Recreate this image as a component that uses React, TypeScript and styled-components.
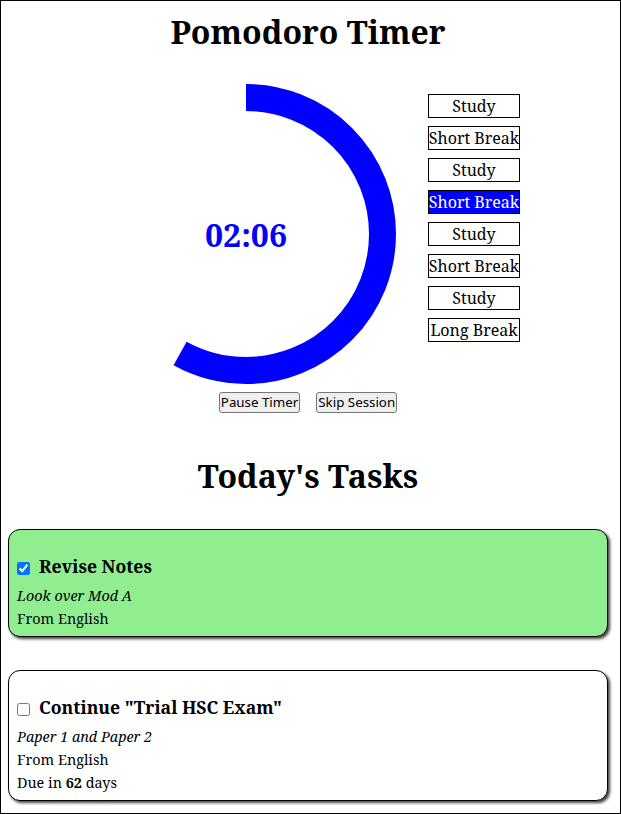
import React from "react";
import styled, { createGlobalStyle } from "styled-components";

const GlobalStyle = createGlobalStyle`
  html, body {
    margin: 0;
    padding: 0;
  }
  body {
    font-family: "Noto Serif", "DejaVu Serif", serif;
    color: #000;
    background: #fff;
  }
`;

const Frame = styled.div`
  border: 1px solid #000;
  min-height: 100vh;
  box-sizing: border-box;
`;

const Content = styled.main`
  width: 600px;
  margin-left: 7px;
  display: flex;
  flex-direction: column;
`;

const Heading = styled.h1<{ $top: number; $bottom: number }>`
  font-size: 32px;
  font-weight: bold;
  text-align: center;
  margin: ${(p) => p.$top}px 0 ${(p) => p.$bottom}px;
`;

const TimerRow = styled.section`
  display: flex;
  justify-content: center;
  align-items: flex-start;
  gap: 32px;
`;

const Dial = styled.svg`
  display: block;
  width: 300px;
  height: 300px;
  flex: none;
`;

const SessionList = styled.ol`
  list-style: none;
  margin: 10px 0 0;
  padding: 0;
  display: flex;
  flex-direction: column;
  gap: 8px;
`;

const SessionItem = styled.li<{ $active?: boolean }>`
  border: 1px solid #000;
  text-align: center;
  font-size: 16px;
  line-height: 22px;
  background: ${(p) => (p.$active ? "#0000ff" : "#fff")};
  color: ${(p) => (p.$active ? "#fff" : "#000")};
`;

const Controls = styled.div`
  display: flex;
  justify-content: center;
  gap: 16px;
  margin-top: 8px;
`;

const ControlButton = styled.button`
  font-family: "Noto Sans", "Open Sans", sans-serif;
  font-size: 13.333px;
  line-height: 17px;
  padding: 1px 1px;
  background: #efefef;
  color: #000;
  border: 1px solid #767676;
  border-radius: 3px;
`;

const TaskList = styled.div`
  display: flex;
  flex-direction: column;
  gap: 33px;
`;

const TaskCard = styled.article<{ $done?: boolean }>`
  border: 1px solid #000;
  border-radius: 12px;
  box-shadow: 2px 2px 3px rgba(0, 0, 0, 0.75);
  background: ${(p) => (p.$done ? "#90ee90" : "#fff")};
  padding: 8px 8px 6px;
`;

const TaskTitle = styled.h3`
  display: flex;
  align-items: center;
  gap: 9px;
  margin: 16px 0 5px;
  font-size: 17.6px;
  font-weight: bold;
  line-height: 25px;
`;

const Check = styled.input`
  margin: 3px 0 0;
  width: 13px;
  height: 13px;
`;

const Detail = styled.div<{ $italic?: boolean }>`
  font-size: 14.4px;
  line-height: 23px;
  font-style: ${(p) => (p.$italic ? "italic" : "normal")};
`;

const sessions = [
  "Study",
  "Short Break",
  "Study",
  "Short Break",
  "Study",
  "Short Break",
  "Study",
  "Long Break",
];

const R = 136.5;
const C = 2 * Math.PI * R;
const progress = 174 / 300;

export default function App() {
  return (
    <>
      <GlobalStyle />
      <Frame>
        <Content>
          <Heading $top={9} $bottom={31}>Pomodoro Timer</Heading>
          <TimerRow>
            <Dial viewBox="0 0 300 300">
              <circle
                cx={150}
                cy={150}
                r={R}
                fill="none"
                stroke="#0000ff"
                strokeWidth={27}
                strokeDasharray={`${C * progress} ${C}`}
                transform="rotate(-90 150 150)"
              />
              <text
                x={150}
                y={162.5}
                textAnchor="middle"
                fill="#0000ff"
                fontSize={32}
                fontWeight="bold"
                fontFamily='"Noto Serif", "DejaVu Serif", serif'
              >
                02:06
              </text>
            </Dial>
            <SessionList>
              {sessions.map((s, i) => (
                <SessionItem key={i} $active={i === 3}>
                  {s}
                </SessionItem>
              ))}
            </SessionList>
          </TimerRow>
          <Controls>
            <ControlButton>Pause Timer</ControlButton>
            <ControlButton>Skip Session</ControlButton>
          </Controls>
          <Heading $top={41} $bottom={32}>Today's Tasks</Heading>
          <TaskList>
            <TaskCard $done>
              <TaskTitle>
                <Check type="checkbox" defaultChecked />
                Revise Notes
              </TaskTitle>
              <Detail $italic>Look over Mod A</Detail>
              <Detail>From English</Detail>
            </TaskCard>
            <TaskCard>
              <TaskTitle>
                <Check type="checkbox" />
                Continue "Trial HSC Exam"
              </TaskTitle>
              <Detail $italic>Paper 1 and Paper 2</Detail>
              <Detail>From English</Detail>
              <Detail>
                Due in <b>62</b> days
              </Detail>
            </TaskCard>
          </TaskList>
        </Content>
      </Frame>
    </>
  );
}
